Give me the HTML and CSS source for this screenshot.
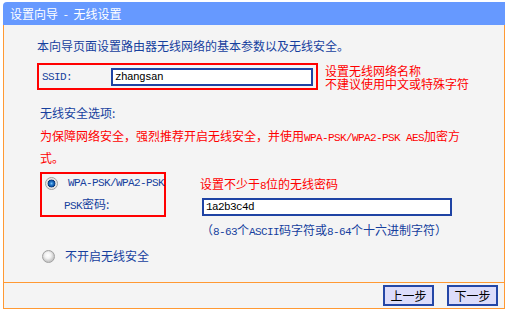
FILE: index.html
```html
<!DOCTYPE html>
<html lang="zh-CN">
<head>
  <meta charset="UTF-8">
  <title>设置向导 - 无线设置</title>
  <link rel="stylesheet" href="styles.css">
</head>
<body>
  <div class="wizard">
    <div class="title">设置向导 - 无线设置</div>
    <div class="panel">
      <div class="content">
        <div class="intro">本向导页面设置路由器无线网络的基本参数以及无线安全。</div>

        <div class="ssid-row">
          <div class="redbox ssid-box">
            <span class="label en">SSID:</span>
            <input class="field ssid-field" type="text" value="zhangsan">
          </div>
          <div class="tip">设置无线网络名称<br>不建议使用中文或特殊字符</div>
        </div>

        <div class="security">
          <div class="sec-title">无线安全选项:</div>
          <div class="warn">为保障网络安全，强烈推荐开启无线安全，并使用<span class="en">WPA-PSK/WPA2-PSK AES</span>加密方式。</div>

          <div class="wpa-row">
            <div class="redbox wpa-box">
              <div class="opt"><span class="radio on"></span><span class="en">WPA-PSK/WPA2-PSK</span></div>
              <div class="psk-label"><span class="en">PSK</span>密码:</div>
            </div>
            <div class="wpa-side">
              <div class="tip">设置不少于<span class="en">8</span>位的无线密码</div>
              <input class="field psk-field" type="text" value="1a2b3c4d">
              <div class="hint">（<span class="en">8-63</span>个<span class="en">ASCII</span>码字符或<span class="en">8-64</span>个十六进制字符）</div>
            </div>
          </div>

          <div class="opt off-opt"><span class="radio"></span>不开启无线安全</div>
        </div>
      </div>
      <div class="footer">
        <button class="btn">上一步</button>
        <button class="btn">下一步</button>
      </div>
    </div>
  </div>
</body>
</html>
```

FILE: styles.css
```css
* {
  box-sizing: border-box;
}

body {
  margin: 0;
  padding: 2px 0 0 3px;
  background: #fff;
  font-family: "Noto Sans CJK SC", sans-serif;
  font-size: 12px;
  color: #163f9e;
}

.en {
  font-family: "Liberation Mono", monospace;
  font-size: 11px;
  letter-spacing: -0.6px;
  white-space: nowrap;
}

.wizard {
  width: 502px;
}

.title {
  height: 23px;
  line-height: 23px;
  padding-left: 7px;
  background: #6699ff;
  color: #fff;
  border-top-left-radius: 4px;
  word-spacing: 3px;
}

.panel {
  background: #f4f4f4;
  border: 1px solid #ff9933;
  border-top: none;
}

.content {
  height: 257px;
  padding: 13px 0 0 33px;
  line-height: 16px;
}

.ssid-row {
  display: flex;
  align-items: center;
  margin-top: 9px;
}

.redbox {
  border: 2px solid #ff0000;
}

.ssid-box {
  display: flex;
  align-items: center;
  width: 281px;
  height: 27px;
  padding: 1px 3px 0 3px;
}

.label {
  width: 69px;
}

.field {
  height: 18px;
  border: 2px solid #1f43a4;
  background: #fff;
  color: #000;
  padding: 0 0 0 2px;
  margin: 0;
  outline: none;
  font-family: "Liberation Mono", monospace;
  font-size: 11px;
  letter-spacing: -0.6px;
}

.ssid-field {
  width: 202px;
}

.tip {
  color: #ff0000;
}

.ssid-row .tip {
  margin-left: 7px;
  line-height: 13px;
}

.security {
  margin-left: 3px;
}

.sec-title {
  margin-top: 15px;
}

.warn {
  color: #ff0000;
  width: 432px;
  line-height: 19px;
  margin-top: 5px;
}

.wpa-row {
  display: flex;
  align-items: flex-start;
  margin-top: 5px;
}

.wpa-box {
  flex-shrink: 0;
  width: 126px;
  height: 45px;
  padding: 1px 0 3px 3px;
}

.opt {
  display: flex;
  align-items: center;
  gap: 10px;
  height: 16px;
  white-space: nowrap;
}

.psk-label {
  margin-top: 5px;
  padding-left: 19px;
}

.radio {
  flex-shrink: 0;
  display: inline-block;
  width: 13px;
  height: 13px;
  border-radius: 50%;
  border: 1px solid #a0a0a0;
  background: radial-gradient(circle at 45% 40%, #ffffff 0, #f2f2f2 3px, #c8c8c8 6px);
}

.radio.on {
  background: radial-gradient(circle at 50% 50%, #7fc4f4 0, #2a7fd0 1.5px, #0f4f9c 3px, #0a3470 3.6px, #dcdcdc 4.2px, #f4f4f4 6px);
}

.wpa-side {
  margin-left: 34px;
  padding-top: 4px;
}

.psk-field {
  display: block;
  width: 250px;
  margin: 4px 0 0 2px;
}

.hint {
  margin-top: 6px;
  margin-left: 1px;
}

.off-opt {
  margin: 8px 0 0 2px;
}

.footer {
  display: flex;
  justify-content: flex-end;
  align-items: center;
  gap: 13px;
  height: 26px;
  padding: 0 6px 1px 0;
  border-top: 1px solid #ff9933;
}

.btn {
  width: 51px;
  height: 21px;
  padding: 0;
  border: 2px solid #2446a6;
  background: #dcdcfa;
  color: #000;
  font-family: "Noto Sans CJK SC", sans-serif;
  font-size: 12px;
}
```
